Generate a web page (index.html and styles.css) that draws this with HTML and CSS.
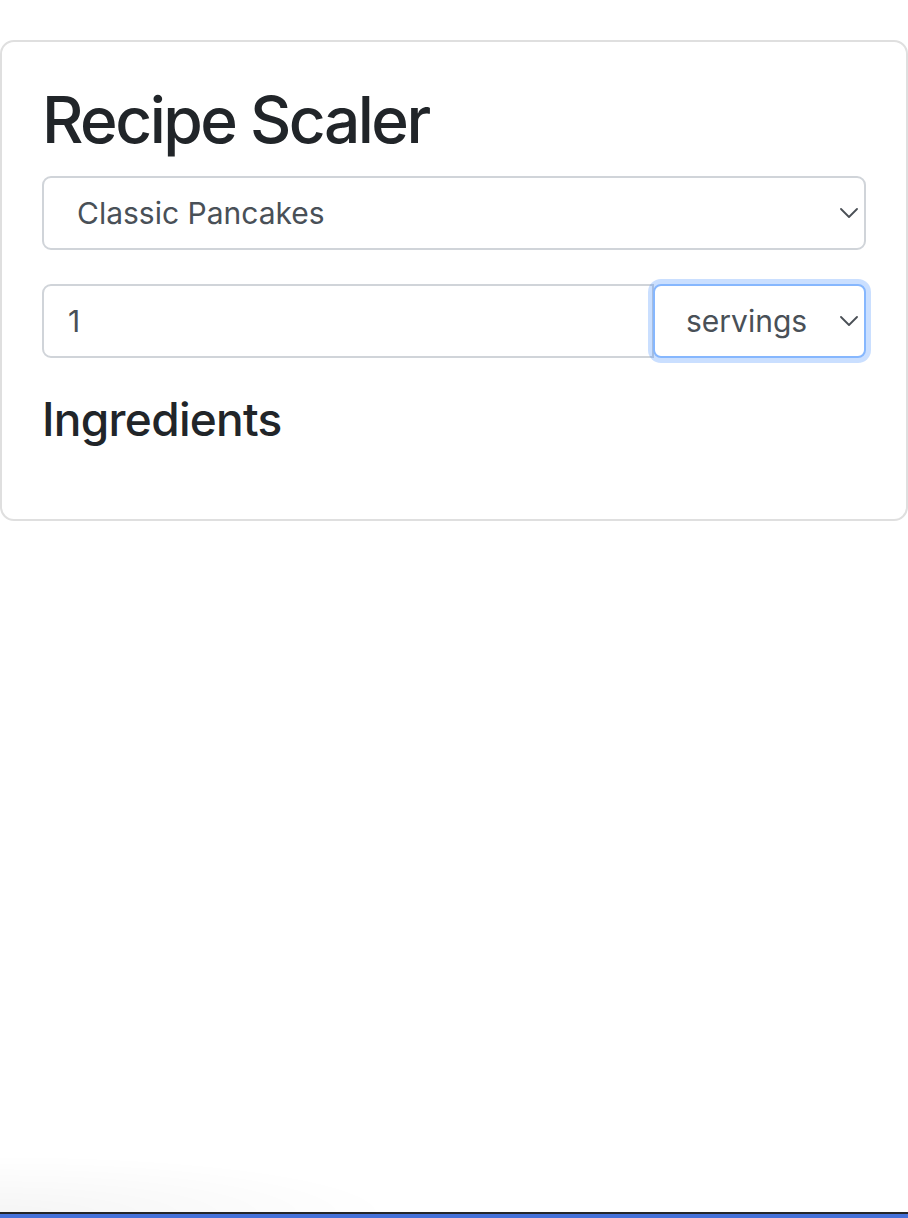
FILE: index.html
```html
<!DOCTYPE html>
<html lang="en">
<head>
<meta charset="utf-8">
<title>Recipe Scaler</title>
<link rel="stylesheet" href="styles.css">
</head>
<body>
<div class="card">
  <h1 class="title">Recipe Scaler</h1>
  <div class="select-wrap">
    <select class="control select">
      <option>Classic Pancakes</option>
    </select>
    <svg class="chev" width="18" height="10" viewBox="0 0 18 10"><path d="M1 1l8 8 8-8" fill="none" stroke="#4a4f55" stroke-width="1.8" stroke-linecap="round" stroke-linejoin="round"/></svg>
  </div>
  <div class="group">
    <input class="control number" type="number" value="1">
    <div class="select-wrap unit">
      <select class="control select focus">
        <option>servings</option>
      </select>
      <svg class="chev" width="18" height="10" viewBox="0 0 18 10"><path d="M1 1l8 8 8-8" fill="none" stroke="#4a4f55" stroke-width="1.8" stroke-linecap="round" stroke-linejoin="round"/></svg>
    </div>
  </div>
  <h2 class="subtitle">Ingredients</h2>
</div>
<div class="bottom-bar"></div>
</body>
</html>
```
FILE: styles.css
```css
* { box-sizing: border-box; }
html, body { margin: 0; padding: 0; background: #fff; }
body {
  font-family: Inter, "Noto Sans", "Liberation Sans", sans-serif;
  color: #212529;
  height: 1218px;
  overflow: hidden;
}
.card {
  margin-top: 40px;
  width: 908px;
  border: 2px solid #dfdfdf;
  border-radius: 14px;
  padding: 40px;
}
.title {
  margin: 0 0 17px;
  font-size: 64px;
  line-height: 1.2;
  font-weight: 500;
  letter-spacing: -2.5px;
  color: #212529;
}
.select-wrap { position: relative; }
.control {
  display: block;
  width: 100%;
  height: 74px;
  border: 2px solid #d0d4d9;
  border-radius: 9px;
  background: #fff;
  font-family: inherit;
  font-size: 30px;
  color: #495057;
  outline: none;
  margin: 0;
}
.select {
  -webkit-appearance: none;
  appearance: none;
  padding: 0 60px 0 33px;
}
.chev {
  position: absolute;
  right: 8px;
  top: 50%;
  margin-top: -5px;
  pointer-events: none;
}
.group {
  display: flex;
  margin-top: 34px;
}
.number {
  flex: 1;
  padding: 0 24px;
  border-radius: 9px 0 0 9px;
  -moz-appearance: textfield;
}
.number::-webkit-inner-spin-button,
.number::-webkit-outer-spin-button { -webkit-appearance: none; margin: 0; }
.unit {
  width: 213px;
  flex: none;
  margin-left: -1px;
}
.unit .select { padding: 0 30px 0 31px; }
.focus {
  border-color: #86b7fe;
  border-radius: 8px;
  box-shadow: 0 0 0 5px rgba(13, 110, 253, 0.22);
}
.subtitle {
  margin: 34px 0 32px;
  font-size: 46px;
  line-height: 1.2;
  font-weight: 500;
  letter-spacing: -0.7px;
  color: #212529;
}
.bottom-bar {
  position: fixed;
  left: 0;
  right: 0;
  bottom: 0;
  height: 6px;
  background: #4571d9;
  border-top: 2px solid #26272a;
}
.bottom-bar::before {
  content: "";
  position: absolute;
  left: 0;
  bottom: 4px;
  width: 400px;
  height: 60px;
  background: radial-gradient(ellipse at 0% 100%, rgba(0,0,0,0.04), rgba(0,0,0,0) 70%);
}
```
